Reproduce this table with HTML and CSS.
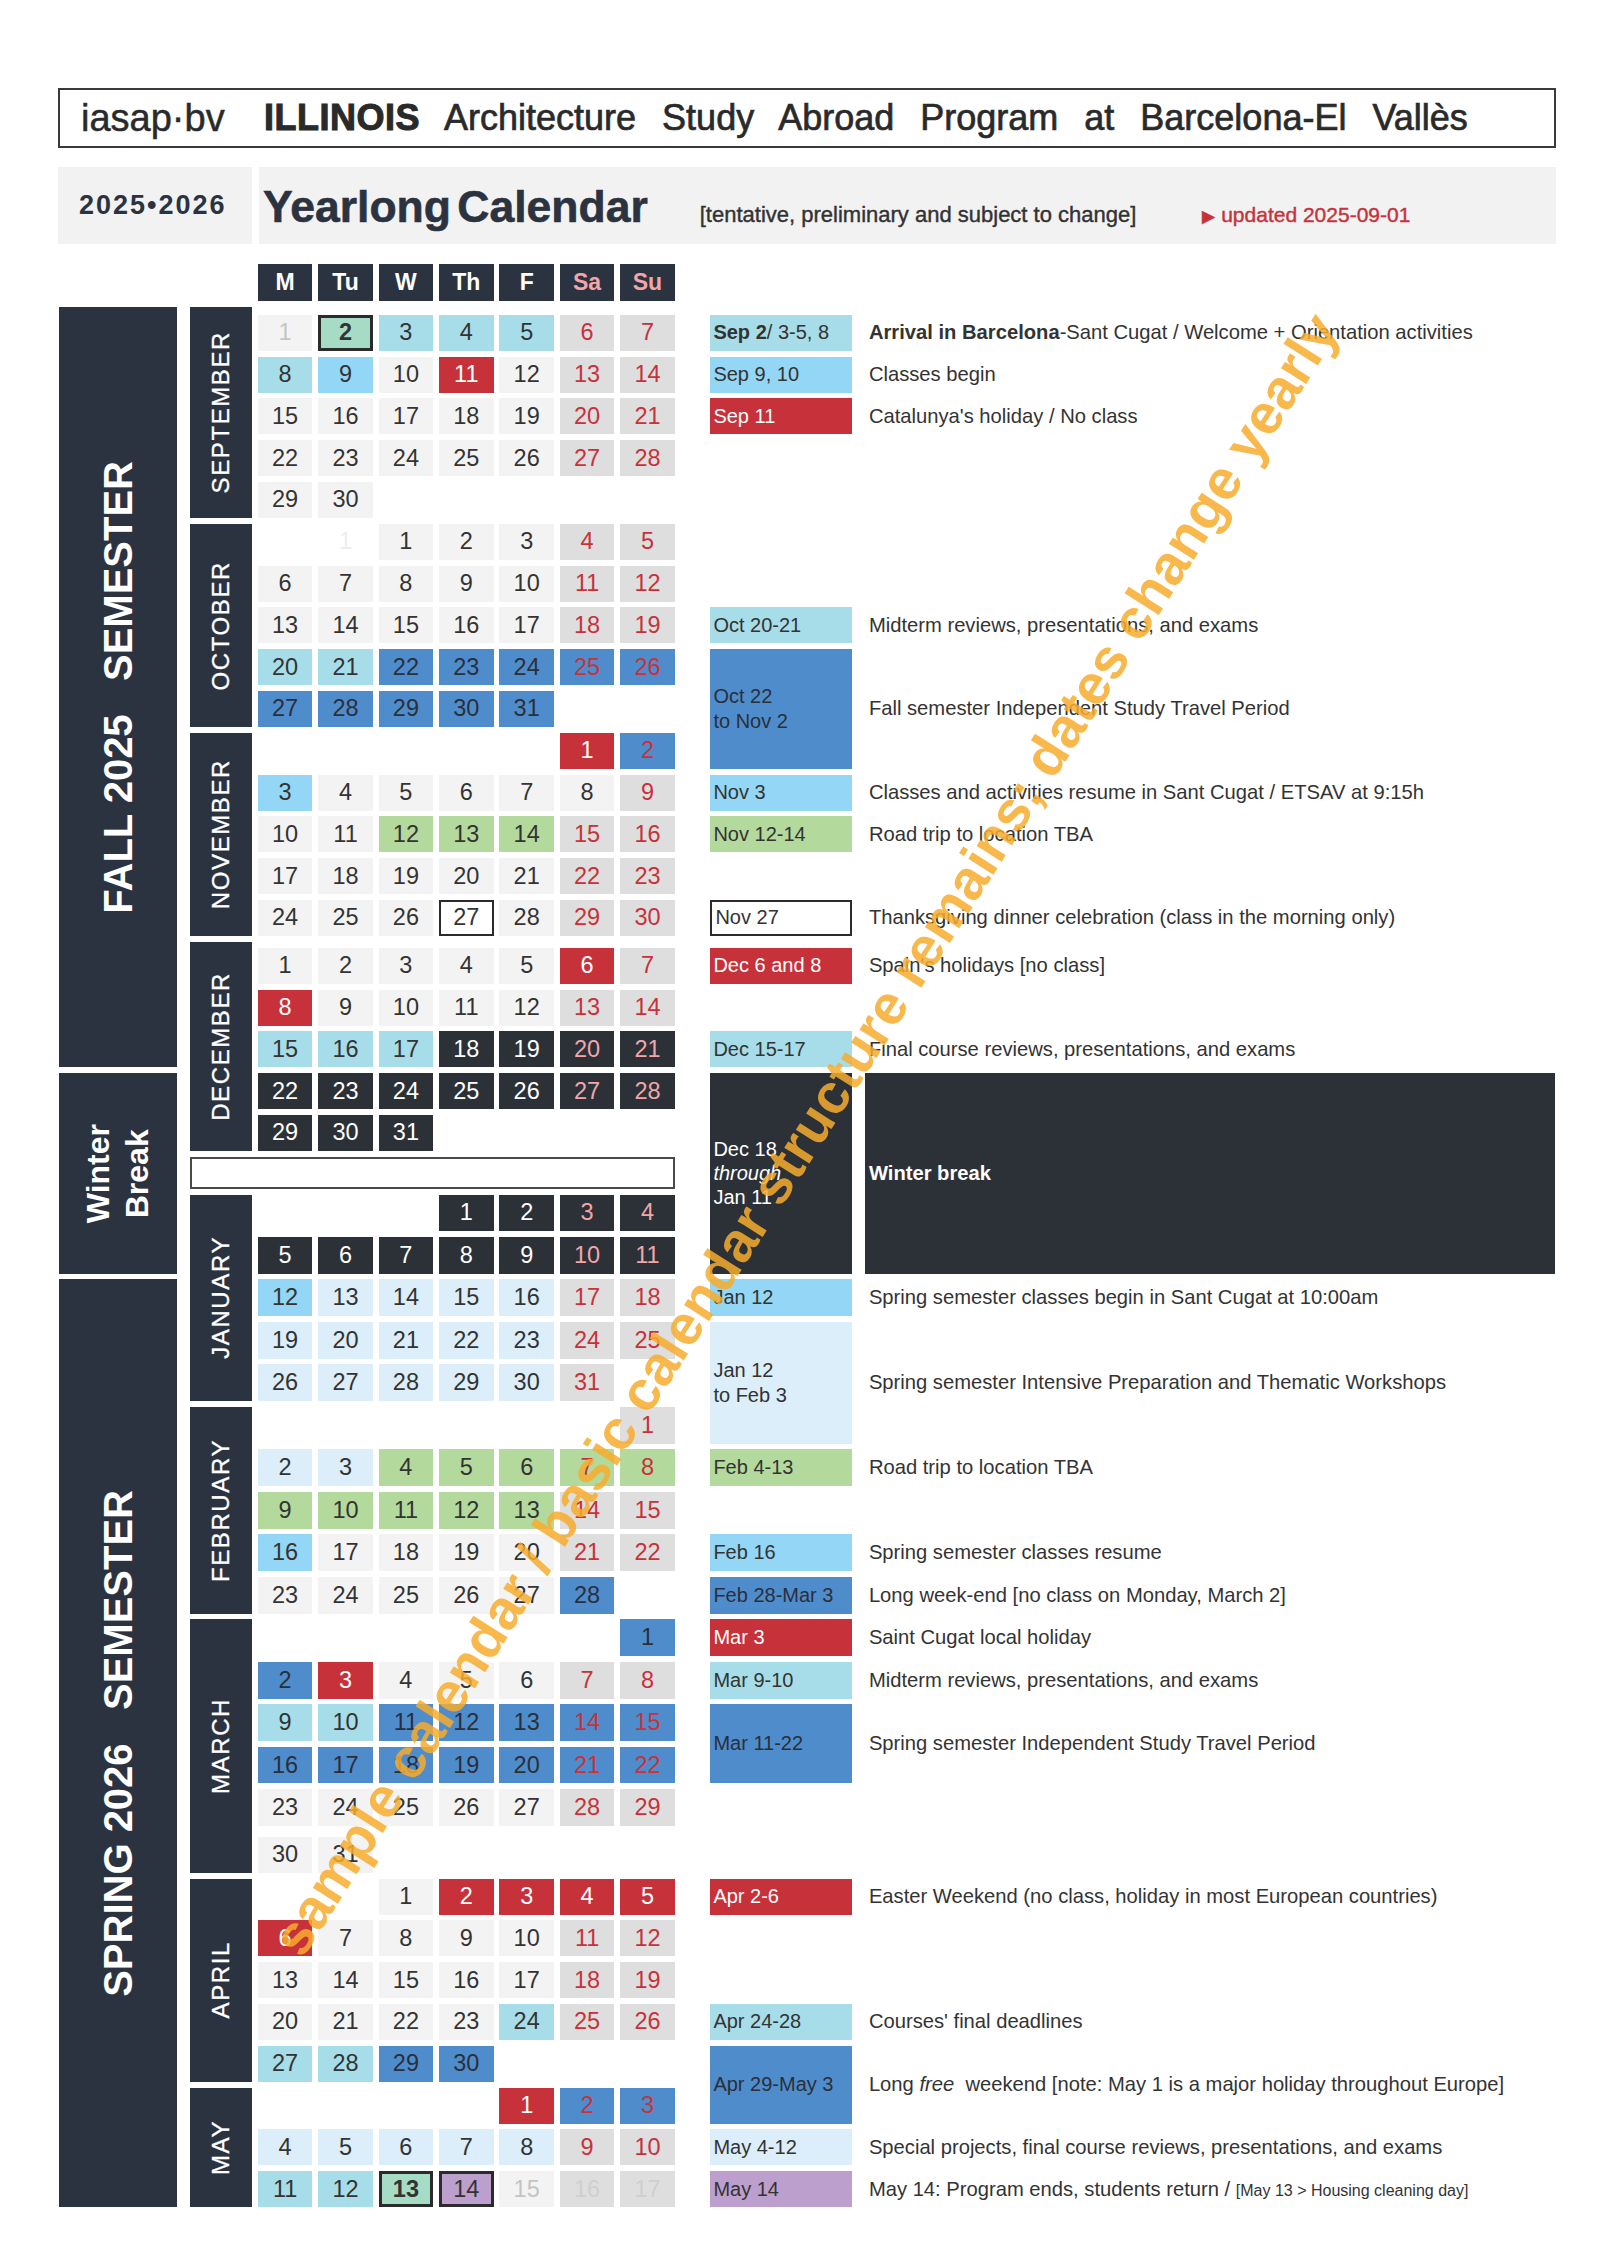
FILE: index.html
```html
<!DOCTYPE html>
<html lang="en">
<head>
<meta charset="utf-8">
<title>IASAP Yearlong Calendar 2025-2026</title>
<link rel="stylesheet" href="styles.css">
</head>
<body>
<div class="page">
  <div class="title">
    <span class="brand">iasap·bv</span>
    <span class="prog"><b>ILLINOIS</b> Architecture Study Abroad Program at Barcelona-El Vallès</span>
  </div>
  <div class="band">
    <div class="year">2025•2026</div>
    <div class="yl">
      <span class="ytitle">Yearlong Calendar</span>
      <span class="tent">[tentative, preliminary and subject to change]</span>
      <span class="upd"><span class="tri">▶</span> updated 2025-09-01</span>
    </div>
  </div>

  <div class="cal">
    <!-- spanning blocks -->
    <div class="sem fall"><span class="vt">FALL 2025   SEMESTER</span></div>
    <div class="sem winter"><span class="vt wb">Winter<br>Break</span></div>
    <div class="sem spring"><span class="vt">SPRING 2026   SEMESTER</span></div>
    <div class="mon m-sep"><span class="vm">SEPTEMBER</span></div>
    <div class="mon m-oct"><span class="vm">OCTOBER</span></div>
    <div class="mon m-nov"><span class="vm">NOVEMBER</span></div>
    <div class="mon m-dec"><span class="vm">DECEMBER</span></div>
    <div class="gapbox"></div>
    <div class="mon m-jan"><span class="vm">JANUARY</span></div>
    <div class="mon m-feb"><span class="vm">FEBRUARY</span></div>
    <div class="mon m-mar"><span class="vm">MARCH</span></div>
    <div class="mon m-apr"><span class="vm">APRIL</span></div>
    <div class="mon m-may"><span class="vm">MAY</span></div>

    <div class="dt sd ev-oct bl"><span>Oct 22<br>to Nov 2</span></div>
    <div class="ds sx ev-oct"><span>Fall semester Independent Study Travel Period</span></div>
    <div class="dt sd ev-win dkb"><span>Dec 18<br><i>through</i><br>Jan 11</span></div>
    <div class="ds sx ev-win win"><span>Winter break</span></div>
    <div class="dt sd ev-jan vl"><span>Jan 12<br>to Feb 3</span></div>
    <div class="ds sx ev-jan"><span>Spring semester Intensive Preparation and Thematic Workshops</span></div>
    <div class="dt sd ev-mar bl"><span>Mar 11-22</span></div>
    <div class="ds sx ev-mar"><span>Spring semester Independent Study Travel Period</span></div>
    <div class="dt sd ev-apr bl"><span>Apr 29-May 3</span></div>
    <div class="ds sx ev-apr"><span>Long <i>free</i>&nbsp; weekend [note: May 1 is a major holiday throughout Europe]</span></div>

    <!-- row 1: header -->
    <i class="x2"></i>
    <span class="h">M</span><span class="h">Tu</span><span class="h">W</span><span class="h">Th</span><span class="h">F</span><span class="h pk">Sa</span><span class="h pk">Su</span>
    <i class="x2"></i>
    <!-- row 2: spacer -->
    <i class="x9"></i>

    <!-- September -->
    <span class="c fd">1</span><span class="c mint">2</span><span class="c cy">3</span><span class="c cy">4</span><span class="c cy">5</span><span class="c we">6</span><span class="c we">7</span>
    <div class="dt cy"><span><b>Sep 2</b>/ 3-5, 8</span></div><div class="ds"><span><b>Arrival in Barcelona</b>-Sant Cugat / Welcome + Orientation activities</span></div>

    <span class="c cy">8</span><span class="c sk">9</span><span class="c">10</span><span class="c rd">11</span><span class="c">12</span><span class="c we">13</span><span class="c we">14</span>
    <div class="dt sk"><span>Sep 9, 10</span></div><div class="ds"><span>Classes begin</span></div>

    <span class="c">15</span><span class="c">16</span><span class="c">17</span><span class="c">18</span><span class="c">19</span><span class="c we">20</span><span class="c we">21</span>
    <div class="dt rd"><span>Sep 11</span></div><div class="ds"><span>Catalunya's holiday / No class</span></div>

    <span class="c">22</span><span class="c">23</span><span class="c">24</span><span class="c">25</span><span class="c">26</span><span class="c we">27</span><span class="c we">28</span>
    <i class="x2"></i>

    <span class="c">29</span><span class="c">30</span><i class="x5"></i>
    <i class="x2"></i>

    <!-- October -->
    <i class="x1"></i><span class="c gh">1</span><span class="c">1</span><span class="c">2</span><span class="c">3</span><span class="c we">4</span><span class="c we">5</span>
    <i class="x2"></i>

    <span class="c">6</span><span class="c">7</span><span class="c">8</span><span class="c">9</span><span class="c">10</span><span class="c we">11</span><span class="c we">12</span>
    <i class="x2"></i>

    <span class="c">13</span><span class="c">14</span><span class="c">15</span><span class="c">16</span><span class="c">17</span><span class="c we">18</span><span class="c we">19</span>
    <div class="dt cy"><span>Oct 20-21</span></div><div class="ds"><span>Midterm reviews, presentations, and exams</span></div>

    <span class="c cy">20</span><span class="c cy">21</span><span class="c bl">22</span><span class="c bl">23</span><span class="c bl">24</span><span class="c blr">25</span><span class="c blr">26</span>

    <span class="c bl">27</span><span class="c bl">28</span><span class="c bl">29</span><span class="c bl">30</span><span class="c bl">31</span><i class="x2"></i>

    <!-- November -->
    <i class="x5"></i><span class="c rd">1</span><span class="c blr">2</span>

    <span class="c sk">3</span><span class="c">4</span><span class="c">5</span><span class="c">6</span><span class="c">7</span><span class="c">8</span><span class="c we">9</span>
    <div class="dt sk"><span>Nov 3</span></div><div class="ds"><span>Classes and activities resume in Sant Cugat / ETSAV at 9:15h</span></div>

    <span class="c">10</span><span class="c">11</span><span class="c gr">12</span><span class="c gr">13</span><span class="c gr">14</span><span class="c we">15</span><span class="c we">16</span>
    <div class="dt gr"><span>Nov 12-14</span></div><div class="ds"><span>Road trip to location TBA</span></div>

    <span class="c">17</span><span class="c">18</span><span class="c">19</span><span class="c">20</span><span class="c">21</span><span class="c we">22</span><span class="c we">23</span>
    <i class="x2"></i>

    <span class="c">24</span><span class="c">25</span><span class="c">26</span><span class="c bx">27</span><span class="c">28</span><span class="c we">29</span><span class="c we">30</span>
    <div class="dt bx"><span>Nov 27</span></div><div class="ds"><span>Thanksgiving dinner celebration (class in the morning only)</span></div>

    <!-- spacer -->
    <i class="x9"></i>

    <!-- December -->
    <span class="c">1</span><span class="c">2</span><span class="c">3</span><span class="c">4</span><span class="c">5</span><span class="c rd">6</span><span class="c we">7</span>
    <div class="dt rd"><span>Dec 6 and 8</span></div><div class="ds"><span>Spain's holidays [no class]</span></div>

    <span class="c rd">8</span><span class="c">9</span><span class="c">10</span><span class="c">11</span><span class="c">12</span><span class="c we">13</span><span class="c we">14</span>
    <i class="x2"></i>

    <span class="c cy">15</span><span class="c cy">16</span><span class="c cy">17</span><span class="c dk">18</span><span class="c dk">19</span><span class="c dkp">20</span><span class="c dkp">21</span>
    <div class="dt cy"><span>Dec 15-17</span></div><div class="ds"><span>Final course reviews, presentations, and exams</span></div>

    <span class="c dk">22</span><span class="c dk">23</span><span class="c dk">24</span><span class="c dk">25</span><span class="c dk">26</span><span class="c dkp">27</span><span class="c dkp">28</span>

    <span class="c dk">29</span><span class="c dk">30</span><span class="c dk">31</span><i class="x4"></i>

    <!-- January -->
    <i class="x3"></i><span class="c dk">1</span><span class="c dk">2</span><span class="c dkp">3</span><span class="c dkp">4</span>

    <span class="c dk">5</span><span class="c dk">6</span><span class="c dk">7</span><span class="c dk">8</span><span class="c dk">9</span><span class="c dkp">10</span><span class="c dkp">11</span>

    <span class="c sk">12</span><span class="c vl">13</span><span class="c vl">14</span><span class="c vl">15</span><span class="c vl">16</span><span class="c we">17</span><span class="c we">18</span>
    <div class="dt sk"><span>Jan 12</span></div><div class="ds"><span>Spring semester classes begin in Sant Cugat at 10:00am</span></div>

    <span class="c vl">19</span><span class="c vl">20</span><span class="c vl">21</span><span class="c vl">22</span><span class="c vl">23</span><span class="c we">24</span><span class="c we">25</span>

    <span class="c vl">26</span><span class="c vl">27</span><span class="c vl">28</span><span class="c vl">29</span><span class="c vl">30</span><span class="c we">31</span><i class="x1"></i>

    <!-- February -->
    <i class="x6"></i><span class="c we">1</span>

    <span class="c vl">2</span><span class="c vl">3</span><span class="c gr">4</span><span class="c gr">5</span><span class="c gr">6</span><span class="c grr">7</span><span class="c grr">8</span>
    <div class="dt gr"><span>Feb 4-13</span></div><div class="ds"><span>Road trip to location TBA</span></div>

    <span class="c gr">9</span><span class="c gr">10</span><span class="c gr">11</span><span class="c gr">12</span><span class="c gr">13</span><span class="c we">14</span><span class="c we">15</span>
    <i class="x2"></i>

    <span class="c sk">16</span><span class="c">17</span><span class="c">18</span><span class="c">19</span><span class="c">20</span><span class="c we">21</span><span class="c we">22</span>
    <div class="dt sk"><span>Feb 16</span></div><div class="ds"><span>Spring semester classes resume</span></div>

    <span class="c">23</span><span class="c">24</span><span class="c">25</span><span class="c">26</span><span class="c">27</span><span class="c bl">28</span><i class="x1"></i>
    <div class="dt bl"><span>Feb 28-Mar 3</span></div><div class="ds"><span>Long week-end [no class on Monday, March 2]</span></div>

    <!-- March -->
    <i class="x6"></i><span class="c bl">1</span>
    <div class="dt rd"><span>Mar 3</span></div><div class="ds"><span>Saint Cugat local holiday</span></div>

    <span class="c bl">2</span><span class="c rd">3</span><span class="c">4</span><span class="c">5</span><span class="c">6</span><span class="c we">7</span><span class="c we">8</span>
    <div class="dt cy"><span>Mar 9-10</span></div><div class="ds"><span>Midterm reviews, presentations, and exams</span></div>

    <span class="c cy">9</span><span class="c cy">10</span><span class="c bl">11</span><span class="c bl">12</span><span class="c bl">13</span><span class="c blr">14</span><span class="c blr">15</span>

    <span class="c bl">16</span><span class="c bl">17</span><span class="c bl">18</span><span class="c bl">19</span><span class="c bl">20</span><span class="c blr">21</span><span class="c blr">22</span>

    <span class="c">23</span><span class="c">24</span><span class="c">25</span><span class="c">26</span><span class="c">27</span><span class="c we">28</span><span class="c we">29</span>
    <i class="x2"></i>

    <span class="c late">30</span><span class="c late">31</span><i class="x5"></i>
    <i class="x2"></i>

    <!-- April -->
    <i class="x2"></i><span class="c">1</span><span class="c rd">2</span><span class="c rd">3</span><span class="c rd">4</span><span class="c rd">5</span>
    <div class="dt rd"><span>Apr 2-6</span></div><div class="ds"><span>Easter Weekend (no class, holiday in most European countries)</span></div>

    <span class="c rd">6</span><span class="c">7</span><span class="c">8</span><span class="c">9</span><span class="c">10</span><span class="c we">11</span><span class="c we">12</span>
    <i class="x2"></i>

    <span class="c">13</span><span class="c">14</span><span class="c">15</span><span class="c">16</span><span class="c">17</span><span class="c we">18</span><span class="c we">19</span>
    <i class="x2"></i>

    <span class="c">20</span><span class="c">21</span><span class="c">22</span><span class="c">23</span><span class="c cy">24</span><span class="c we">25</span><span class="c we">26</span>
    <div class="dt cy"><span>Apr 24-28</span></div><div class="ds"><span>Courses' final deadlines</span></div>

    <span class="c cy">27</span><span class="c cy">28</span><span class="c bl">29</span><span class="c bl">30</span><i class="x3"></i>

    <!-- May -->
    <i class="x4"></i><span class="c rd">1</span><span class="c blr">2</span><span class="c blr">3</span>

    <span class="c vl">4</span><span class="c vl">5</span><span class="c vl">6</span><span class="c vl">7</span><span class="c vl">8</span><span class="c we">9</span><span class="c we">10</span>
    <div class="dt vl"><span>May 4-12</span></div><div class="ds"><span>Special projects, final course reviews, presentations, and exams</span></div>

    <span class="c cy">11</span><span class="c cy">12</span><span class="c mint">13</span><span class="c pu">14</span><span class="c fd">15</span><span class="c fdw">16</span><span class="c fdw">17</span>
    <div class="dt pu"><span>May 14</span></div><div class="ds"><span>May 14: Program ends, students return / <small>[May 13 &gt; Housing cleaning day]</small></span></div>
  </div>

  <div class="wm">sample calendar / basic calendar structure remains; dates change yearly</div>
</div>
</body>
</html>
```

FILE: styles.css
```css
* { box-sizing: border-box; }

body {
  margin: 0;
  background: #fff;
  font-family: "Liberation Sans", Arial, sans-serif;
  color: #333;
}

.page {
  position: relative;
  width: 1600px;
  height: 2264px;
  padding: 88px 0 0 58px;
  overflow: hidden;
}

/* ---------- title bar ---------- */
.title {
  width: 1498px;
  height: 60px;
  border: 2px solid #3a3a3a;
  display: flex;
  align-items: center;
  padding-left: 21px;
  color: #2a2a2a;
}
.brand {
  width: 183px;
  font-size: 38px;
  -webkit-text-stroke: 0.5px #2a2a2a;
}
.prog {
  font-size: 36px;
  word-spacing: 16px;
  -webkit-text-stroke: 0.7px #2a2a2a;
}
.prog b { letter-spacing: 0.5px; -webkit-text-stroke: 1px #2a2a2a; }

/* ---------- band ---------- */
.band {
  display: flex;
  gap: 7px;
  margin-top: 19px;
  width: 1498px;
  height: 77px;
}
.year {
  width: 194px;
  background: #f2f2f2;
  display: flex;
  align-items: center;
  padding-left: 21px;
  font-weight: bold;
  font-size: 27px;
  letter-spacing: 2px;
  color: #2c3340;
}
.yl {
  flex: 1;
  background: #f2f2f2;
  display: flex;
  align-items: baseline;
  padding: 15px 0 0 4px;
}
.ytitle {
  font-size: 44.5px;
  font-weight: bold;
  word-spacing: -6px;
  color: #2c3340;
  -webkit-text-stroke: 0.6px #2c3340;
}
.tent {
  margin-left: 52px;
  font-size: 22px;
  color: #333;
  -webkit-text-stroke: 0.4px #333;
}
.upd {
  margin-left: 66px;
  font-size: 21px;
  color: #c8313a;
  -webkit-text-stroke: 0.4px #c8313a;
}
.tri { font-size: 17px; }

/* ---------- calendar grid ---------- */
.cal {
  display: grid;
  margin: 20px 0 0 1px;
  grid-template-columns: 125.1px 62px repeat(7, 54.5px) 171.3px 697.1px;
  grid-template-rows:
    37px 2.2px
    repeat(15, 36px)
    0.2px
    repeat(5, 36px)
    32px
    repeat(15, 36.7px)
    41px
    repeat(8, 36px);
  column-gap: 5.9px;
  row-gap: 5.8px;
}

.x1 { grid-column: span 1; }
.x2 { grid-column: span 2; }
.x3 { grid-column: span 3; }
.x4 { grid-column: span 4; }
.x5 { grid-column: span 5; }
.x6 { grid-column: span 6; }
.x9 { grid-column: span 9; }

/* semester blocks */
.sem {
  grid-column: 1;
  margin-right: 7.1px;
  background: #2c3340;
  color: #fff;
  display: flex;
  align-items: center;
  justify-content: center;
}
.fall { grid-row: 2 / 22; }
.winter { grid-row: 22 / 27; }
.spring { grid-row: 27 / 49; }
.vt {
  writing-mode: vertical-rl;
  transform: rotate(180deg);
  white-space: pre;
  font-size: 40px;
  font-weight: bold;
}
.vt.wb {
  white-space: normal;
  font-size: 32px;
  line-height: 39px;
  text-align: center;
}

/* month blocks */
.mon {
  grid-column: 2;
  background: #2c3340;
  color: #fff;
  display: flex;
  align-items: center;
  justify-content: center;
}
.vm {
  writing-mode: vertical-rl;
  transform: rotate(180deg);
  font-size: 24px;
  letter-spacing: 1.6px;
  -webkit-text-stroke: 0.3px #fff;
}
.m-sep { grid-row: 2 / 8; }
.m-oct { grid-row: 8 / 13; }
.m-nov { grid-row: 13 / 18; }
.m-dec { grid-row: 18 / 24; }
.m-jan { grid-row: 25 / 30; }
.m-feb { grid-row: 30 / 35; }
.m-mar { grid-row: 35 / 41; }
.m-apr { grid-row: 41 / 46; }
.m-may { grid-row: 46 / 49; }

.gapbox {
  grid-row: 24;
  grid-column: 2 / 10;
  border: 2px solid #4a4a4a;
  background: #fff;
}

/* header cells */
.h {
  background: #2c3340;
  color: #fff;
  font-weight: bold;
  font-size: 23px;
  display: flex;
  align-items: center;
  justify-content: center;
}
.h.pk { color: #f3a6aa; }

/* day cells */
.c {
  display: flex;
  align-items: center;
  justify-content: center;
  background: #f3f3f3;
  font-size: 23.5px;
  color: #333;
}
.c.late { margin-top: 5px; }
.we { background: #dedede; color: #c8313a; }
.cy { background: #a7dde9; }
.sk { background: #93d6f5; }
.bl { background: #4f8ccc; color: #2a2f3a; }
.blr { background: #4f8ccc; color: #c8313a; }
.rd { background: #c7313a; color: #fff; }
.gr { background: #b3d99d; }
.grr { background: #b3d99d; color: #c8313a; }
.vl { background: #dbeef9; }
.dk { background: #2b3137; color: #fff; }
.dkp { background: #2b3137; color: #f3a6aa; }
.mint { background: #a6dbc6; border: 3px solid #2b2b2b; font-weight: bold; }
.pu { background: #bc9fcd; }
.c.pu { border: 3px solid #2b2b2b; }
.bx { background: #fff; border: 2px solid #2b2b2b; }
.fd { color: #c4c4c4; }
.fdw { background: #dedede; color: #cfcfcf; }
.gh { background: transparent; color: #ededed; }

/* events */
.dt {
  margin-left: 29.8px;
  display: flex;
  align-items: center;
  padding-left: 3px;
  font-size: 20px;
  line-height: 25px;
  color: #333;
}
.dt.rd { color: #fff; }
.dt.bl { color: #2a2f3a; }
.dkb { background: #2b3137; color: #fff; line-height: 24px; }
.ds {
  margin-left: 7.1px;
  padding-left: 4px;
  display: flex;
  align-items: center;
  font-size: 20.2px;
  color: #333;
  white-space: nowrap;
}
.ds small { font-size: 16px; }
.ds.win { background: #2b3137; color: #fff; font-weight: bold; }

.sd { grid-column: 10; }
.sx { grid-column: 11; }
.ev-oct { grid-row: 11 / 14; }
.ev-win { grid-row: 22 / 27; }
.ev-jan { grid-row: 28 / 31; }
.ev-mar { grid-row: 37 / 39; }
.ev-apr { grid-row: 45 / 47; }

/* watermark */
.wm {
  position: absolute;
  left: 805px;
  top: 1134px;
  transform: translate(-50%, -50%) rotate(-57.5deg);
  font-size: 56px;
  font-weight: bold;
  color: rgba(247, 172, 45, 0.85);
  white-space: nowrap;
  pointer-events: none;
}
```
